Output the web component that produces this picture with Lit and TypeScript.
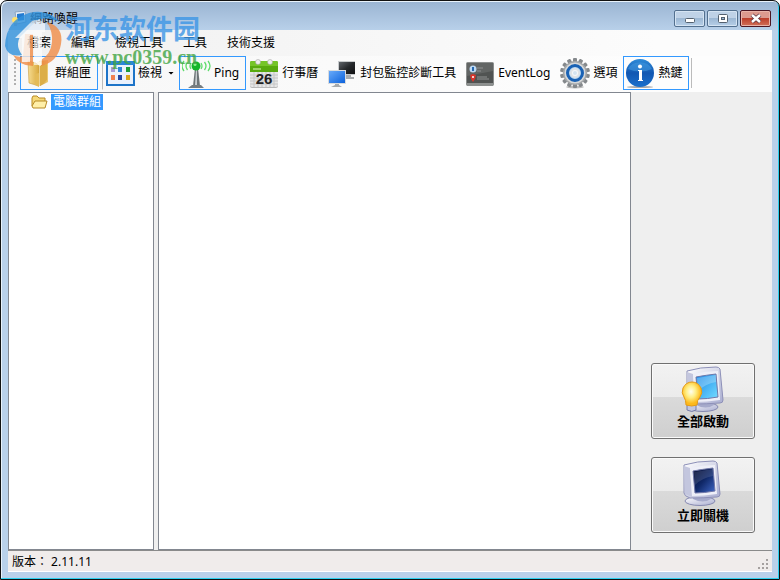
import { LitElement, html, svg, css } from "lit";
import { customElement } from "lit/decorators.js";

const folderBox = html`<svg class="icon" viewBox="0 0 30 32" aria-hidden="true">
  <defs>
    <linearGradient id="fa" x1="0" x2="1"><stop offset="0" stop-color="#f6dc92"/><stop offset="1" stop-color="#d9a93c"/></linearGradient>
    <linearGradient id="fb" x1="0" x2="1"><stop offset="0" stop-color="#c99628"/><stop offset="1" stop-color="#edcb74"/></linearGradient>
  </defs>
  <path d="M16 4l9-1v22l-8 4z" fill="url(#fb)"/>
  <path d="M14 5l4-1v22l-4 3z" fill="#fbe9b4"/>
  <path d="M5 4l8 2 3 3v20L6 26z" fill="url(#fa)" stroke="#c79a3c" stroke-width=".6"/>
  <path d="M12 17l4-1v14l-4-2z" fill="#e4bb58"/>
  <path d="M17 9l7-2v16l-7 6z" fill="#dcae46"/>
</svg>`;

const grid = html`<svg class="icon" viewBox="0 0 30 32" aria-hidden="true">
  <rect x="2" y="5" width="27" height="23" fill="#fff" stroke="#1d74c8" stroke-width="2"/>
  <rect x="1" y="4" width="29" height="4" fill="#2a86da"/>
  <rect x="3" y="8" width="25" height="19" fill="#eaf1fc"/>
  ${[["#a79bd6", 6, 10], ["#2f86d8", 13, 10], ["#1f9c3a", 21, 10], ["#f08050", 6, 18], ["#2747a0", 13, 18], ["#dba61c", 21, 18]].map(
    ([c, x, y]) => svg`<rect x=${x} y=${y} width="4" height="5" fill=${c}/>`
  )}
</svg>`;

const antenna = html`<svg class="icon" viewBox="0 0 30 32" aria-hidden="true">
  <g fill="none" stroke="#5fdc6c" stroke-width="1.300">
    <path d="M9 6q-2 3 0 6M5.500 5q-3 4 0 8M2 4q-4 5 0 10M19 6q2 3 0 6M22.500 5q3 4 0 8M26 4q4 5 0 10"/>
  </g>
  <path d="M13 11h3l2 18h-7z" fill="#6d7477"/>
  <path d="M14 12h1v16h-2z" fill="#c8cdcf"/>
  <path d="M6 31l4-3h9l3 3z" fill="#777d80"/>
  <circle cx="14" cy="9" r="4.500" fill="#16b52c"/><circle cx="13" cy="7.500" r="1.500" fill="#86f08a"/>
</svg>`;

const calendar = html`<svg class="icon" viewBox="0 0 30 32" aria-hidden="true">
  <rect x="1" y="4" width="28" height="27" rx="2" fill="#b8b8b8"/>
  <rect x="1" y="4" width="28" height="26" rx="2" fill="#e6e6e6"/>
  <path d="M1 15V6q0-2 2-2h24q2 0 2 2v9z" fill="#58a90f"/>
  <path d="M1 9V6q0-2 2-2h24q2 0 2 2v3z" fill="#75c428"/>
  <path d="M1 18h28M1 21h28M1 24h28M1 27h28M5 15v15M9 15v15M13 15v15M17 15v15M21 15v15M25 15v15" stroke="#c6c6c6" stroke-width="1"/>
  <circle cx="9" cy="5" r="2.500" fill="#eee" stroke="#999" stroke-width=".5"/>
  <circle cx="21" cy="5" r="2.500" fill="#eee" stroke="#999" stroke-width=".5"/>
  <path d="M4 12h8" stroke="#b6df8b" stroke-width="1.500"/>
  <text x="15" y="27" text-anchor="middle" class="date">26</text>
</svg>`;

const screens = html`<svg class="icon" viewBox="0 0 30 32" aria-hidden="true">
  <defs>
    <linearGradient id="sa" x1="0" y1="0" x2="1" y2="1"><stop offset="0" stop-color="#68aafa"/><stop offset="1" stop-color="#0c62dc"/></linearGradient>
    <linearGradient id="sb" x1="0" y1="0" x2="1" y2="1"><stop offset="0" stop-color="#60656a"/><stop offset=".5" stop-color="#25282b"/><stop offset="1" stop-color="#101112"/></linearGradient>
  </defs>
  <path d="M19 17h5v3h3v2h-8z" fill="#a7abae"/>
  <rect x="11" y="4" width="17" height="14" fill="#c8cbcd"/>
  <rect x="12" y="5" width="16" height="12" fill="url(#sb)"/>
  <path d="M8 26h4v2l3 2H4l4-2z" fill="#a6aaad"/>
  <rect x="1" y="13" width="18" height="14" fill="#d8dbde"/>
  <rect x="2" y="14" width="16" height="12" fill="url(#sa)"/>
</svg>`;

const logPanel = html`<svg class="icon" viewBox="0 0 30 32" aria-hidden="true">
  <rect x="1.500" y="5.500" width="27" height="23" rx="1" fill="#505352" stroke="#8b8e8d"/>
  <path d="M2 6h26v8L2 19z" fill="#626564"/>
  <path d="M2 26h26v3H2z" fill="#8d908f"/>
  <circle cx="8" cy="12" r="3.500" fill="#bcd8f2"/><path d="M8 10v4" stroke="#2568b0" stroke-width="2"/>
  <path d="M5 18l3-1 3 1-1 4-2 3-2-3z" fill="#d8352c"/><circle cx="8" cy="20" r="1" fill="#fff"/>
  <path d="M12 11h6M12 14h4M12 20h10M12 22h12" stroke="#8f9291" stroke-width="1"/>
</svg>`;

const gear = html`<svg class="icon" viewBox="0 0 30 32" aria-hidden="true">
  <ellipse cx="15" cy="30" rx="9" ry="1.500" fill="#bbb"/>
  ${Array.from({ length: 14 }, (_, i) => svg`<rect x="13" y="1" width="4" height="6" rx="1" fill="#85898c" transform="rotate(${(i * 360) / 14} 15 16)"/>`)}
  <circle cx="15" cy="16" r="12" fill="#a4a7a9"/>
  <circle cx="15" cy="16" r="10.500" fill="#d6d8d9"/>
  <circle cx="15" cy="16" r="7.500" fill="#bcd9f2" stroke="#1a62b4" stroke-width="3"/>
  <circle cx="15" cy="16" r="4" fill="#f5f8fa" stroke="#dfe3e6" stroke-width="2"/>
  <circle cx="15" cy="16" r="2" fill="#d4e4f0"/>
</svg>`;

const info = html`<svg class="icon" viewBox="0 0 30 32" aria-hidden="true">
  <defs><linearGradient id="ia" x1="0" y1="0" x2="0" y2="1"><stop offset="0" stop-color="#2f8bd8"/><stop offset=".5" stop-color="#1257b2"/><stop offset="1" stop-color="#1a70cc"/></linearGradient></defs>
  <ellipse cx="14" cy="30" rx="13" ry="1" fill="#aaa"/>
  <circle cx="14" cy="16" r="14" fill="url(#ia)"/>
  <path d="M2 12a13 11 0 0 1 24 0q-12 5-24 0z" fill="#4096dd" opacity=".6"/>
  <circle cx="14" cy="9.500" r="2" fill="#fff"/>
  <path d="M12 13h4v10h1v1h-5v-1h1v-9h-1z" fill="#fff"/>
</svg>`;

const monitor = (on: boolean) => html`<svg class="monitor" viewBox="0 0 48 48" aria-hidden="true">
  <defs>
    <linearGradient id="mc" x1="0" y1="0" x2="1" y2="1"><stop offset="0" stop-color="#fff"/><stop offset="1" stop-color="#a9add0"/></linearGradient>
    <linearGradient id="mo" x1="0" y1="0" x2="1" y2="1"><stop offset="0" stop-color="#1686e8"/><stop offset="1" stop-color="#74dcff"/></linearGradient>
    <linearGradient id="mf" x1="0" y1="0" x2="1" y2="1"><stop offset="0" stop-color="#02082c"/><stop offset=".5" stop-color="#102868"/><stop offset="1" stop-color="#4068c8"/></linearGradient>
    <radialGradient id="mb" cx=".45" cy=".4"><stop offset="0" stop-color="#fffef0"/><stop offset=".5" stop-color="#ffee83"/><stop offset="1" stop-color="#fdb91c"/></radialGradient>
  </defs>
  <g transform=${on ? "translate(3 1)" : "translate(0 1)"}>
    <ellipse cx="21" cy="41" rx="15" ry="4.500" fill="url(#mc)" stroke="#8689b0"/>
    <path d="M15 34h16l1 5q-8 5-18 0z" fill="#a6aacb"/>
    <path d="M5 5Q18 1 34 1q3 0 4 2l3 31q0 3-3 3-14 1-27 1-6-2-6-5z" fill="url(#mc)" stroke="#8d90b8"/>
    <path d="M5 6l6 2 2 29-7-3z" fill="#c3c6de"/>
    <path d="M11 8q13-3 25-3l2 29q-13 2-25 2z" fill="#eeeff8"/>
    <path d="M14 11q11-2 20-3l2 23q-11 2-20 2z" fill=${on ? "url(#mo)" : "url(#mf)"} stroke="#7077a8"/>
    <path d="M15 12l19-3v7q-11 2-18 9z" fill="#fff" opacity=${on ? ".25" : ".12"}/>
  </g>
  ${on
    ? svg`<path d="M8 39h9v6q-4 3-9 0z" fill="#c2c7e0" stroke="#777ca8"/><path d="M7 40q0-5-2-8-3-4-1-9 3-6 9-6t9 6q2 5-1 9-3 3-3 8-5 2-11 0z" fill="url(#mb)" stroke="#e49b16"/>`
    : ""}
</svg>`;

const tools = [
  { label: "群組匣", icon: folderBox, cls: "boxed" },
  { label: "檢視", icon: grid, cls: "view", drop: true },
  { label: "Ping", icon: antenna, cls: "boxed" },
  { label: "行事曆", icon: calendar, cls: "" },
  { label: "封包監控診斷工具", icon: screens, cls: "" },
  { label: "EventLog", icon: logPanel, cls: "wide" },
  { label: "選項", icon: gear, cls: "" },
  { label: "熱鍵", icon: info, cls: "boxed" },
];

@customElement("app-root")
export class AppRoot extends LitElement {
  static styles = css`
    :host { display: block; font: 12px/16px "Noto Sans", "Noto Sans CJK TC", sans-serif; color: #000; }
    * { box-sizing: border-box; }
    button { font: inherit; color: inherit; margin: 0; padding: 0; border: 0; background: none; white-space: nowrap; }
    svg { display: block; flex: none; }
    .window {
      position: relative; display: flex; flex-direction: column; min-height: 100vh; padding: 0 6px 7px;
      background: linear-gradient(#9ab4d2, #b9d1ea 30px); overflow: hidden;
      border: 1px solid #111; border-radius: 7px 7px 0 0;
      box-shadow: inset -1px -1px #2bd0ee, inset 1px 1px #e8f2fb;
    }
    .title { height: 29px; display: flex; align-items: center; padding: 6px 2px 0 4px; gap: 3px; }
    .title h1 { flex: 1; margin: 0; font-size: 12px; font-weight: 400; }
    .controls { display: flex; gap: 2px; }
    .controls button {
      width: 31px; height: 17px; border: 1px solid #53708f; border-radius: 2px; box-shadow: inset 0 0 0 1px #d5e4f3;
      background: linear-gradient(#bfd2e7 50%, #9db8d4 50%, #b6cfe8); display: grid; place-items: center;
    }
    .controls .close { border-color: #4c1622; background: linear-gradient(#dd9a8e 45%, #bd3f2b 50%, #d0705a); box-shadow: inset 0 0 0 1px #e9b3a8; }
    .client { flex: 1; display: flex; flex-direction: column; margin: 0 1px; background: #efefef; }
    .menu { height: 26px; display: flex; align-items: center; gap: 20px; padding-left: 19px; background: linear-gradient(90deg, #f0f0f0, #fcfcfc 85%); }
    .tools { height: 36px; display: flex; align-items: center; padding: 0 0 2px 6px; background: linear-gradient(90deg, #f7f7f7, #fdfdfd 85%); }
    .grip { width: 2px; height: 28px; margin-right: 4px; background: repeating-linear-gradient(#b0b0b0 0 2px, transparent 2px 4px); }
    .tool { display: flex; align-items: center; height: 34px; gap: 3px; padding: 0 5px 0 2px; flex: none; border: 1px solid transparent; }
    .boxed { border-color: #3399ff; gap: 2px; padding-right: 6px; }
    .wide { padding-right: 6px; }
    .view { margin-left: 4px; padding-right: 4px; border-left-color: #bcbcbc; }
    .icon { width: 30px; height: 32px; }
    .date { font: bold 15px "Liberation Sans", sans-serif; fill: #222; }
    .arrow { width: 6px; height: 3px; margin-left: 3px; background: #000; clip-path: polygon(0 0, 100% 0, 50% 100%); }
    .end { width: 1px; height: 30px; background: #bbb; margin-left: 2px; }
    .body { flex: 1; display: grid; grid-template-columns: 146px minmax(0, 1fr) 141px; }
    .tree, .list { background: #fff; border: 1px solid #828790; }
    .tree { margin: 0; padding: 1px 0 0 22px; list-style: none; }
    .node { display: flex; align-items: center; gap: 3px; }
    .node button { background: #3399ff; color: #fff; padding: 0 2px; }
    .list { margin-left: 4px; }
    .actions { display: flex; flex-direction: column; justify-content: flex-end; gap: 18px; padding: 0 17px 17px 20px; }
    .action {
      height: 76px; display: flex; flex-direction: column; align-items: center; padding-top: 1px; font-weight: 700; font-size: 13px;
      border: 1px solid #707070; border-radius: 3px; background: linear-gradient(#f2f2f2, #ebebeb 45%, #dadada 45%, #cfcfcf); box-shadow: inset 0 0 0 1px #fafafa;
    }
    .monitor { width: 48px; height: 48px; }
    .status { height: 22px; display: flex; align-items: center; justify-content: space-between; padding: 2px 2px 0 4px; background: #f0eceb; border-top: 1px solid #8a8a8a; border-bottom: 1px solid #fff; }
    .status svg { align-self: flex-end; }
    .mark { position: absolute; left: 4px; top: 9px; display: flex; pointer-events: none; opacity: .8; }
    .mark p { margin: 0; }
    .brand { font: 700 27px/30px "Noto Sans CJK SC", sans-serif; color: #3c96e6; white-space: nowrap; padding-top: 3px; }
    .url { font: 700 20px/20px "Liberation Serif", serif; color: #42a545; padding-top: 4px; }
  `;

  render() {
    return html`<main class="window">
      <header class="title">
        <svg width="16" height="16" viewBox="0 0 16 16" aria-hidden="true"><path d="M4 1l10-1 1 11-9 2z" fill="#e6eef8" stroke="#8ba4c0"/><path d="M6 3l7-1v7l-7 1z" fill="#237bd2"/><circle cx="4" cy="9" r="3" fill="#ffe16b"/><path d="M3 12h3v3H3z" fill="#9ea9bc"/></svg>
        <h1>網路喚醒</h1>
        <div class="controls">
          <button aria-label="最小化"><svg width="12" height="11"><rect x="1.500" y="5.500" width="9" height="4" rx="1" fill="#fff" stroke="#53606f"/></svg></button>
          <button aria-label="最大化"><svg width="12" height="11"><rect x="1.500" y="1.500" width="9" height="8" rx="1" fill="#fff" stroke="#53606f"/><rect x="4.500" y="4.500" width="3" height="2" fill="#9db8d4" stroke="#53606f"/></svg></button>
          <button class="close" aria-label="關閉"><svg width="12" height="11"><path d="M2 2l8 7M10 2L2 9" stroke="#5b3440" stroke-width="4"/><path d="M2 2l8 7M10 2L2 9" stroke="#fff" stroke-width="2.500"/></svg></button>
        </div>
      </header>
      <div class="client">
        <nav class="menu">${["檔案", "編輯", "檢視工具", "工具", "技術支援"].map((m) => html`<button>${m}</button>`)}</nav>
        <div class="tools" role="toolbar">
          <span class="grip"></span>
          ${tools.map((t) => html`<button class="tool ${t.cls}">${t.icon}<span>${t.label}</span>${t.drop ? html`<i class="arrow"></i>` : ""}</button>`)}
          <span class="end"></span>
        </div>
        <div class="body">
          <ul class="tree">
            <li class="node">
              <svg width="17" height="16" viewBox="0 0 17 16" aria-hidden="true"><path d="M1 12V4l1-2h4l2 2h6v3" fill="#f6d978" stroke="#b78a25"/><path d="M4 7h12l-2 7H2l-1-2z" fill="#ffefa8" stroke="#b78a25"/></svg>
              <button>電腦群組</button>
            </li>
          </ul>
          <section class="list"></section>
          <aside class="actions">
            <button class="action">${monitor(true)}<span>全部啟動</span></button>
            <button class="action">${monitor(false)}<span>立即關機</span></button>
          </aside>
        </div>
        <footer class="status"><span>版本： 2.11.11</span>
          <svg width="12" height="12" aria-hidden="true"><path d="M8 0h2v2H8zM4 4h2v2H4zM8 4h2v2H8zM0 8h2v2H0zM4 8h2v2H4zM8 8h2v2H8z" fill="#a5a09f"/></svg>
        </footer>
      </div>
      <div class="mark">
        <svg width="60" height="58" viewBox="0 0 60 58" aria-hidden="true">
          <path d="M0 36Q1 10 24 3q18-5 31 9-12-5-21-3l-9 8-10 10q-5 8 2 18Q3 48 0 36z" fill="#2f91dc"/>
          <path d="M8 45q6 3 10 1l2-22h8v32Q14 56 8 45zM36 50q10-6 11-18 1-10-5-20 17 5 14 22-3 18-20 22z" fill="#f08c46"/>
          <path d="M13 25l14-14q8-3 13 3v8h-3v33h-8V25h-4v27h-8V28h-7z" fill="#fff" opacity=".8"/>
        </svg>
        <div><p class="brand">河东软件园</p><p class="url">www.pc0359.cn</p></div>
      </div>
    </main>`;
  }
}
